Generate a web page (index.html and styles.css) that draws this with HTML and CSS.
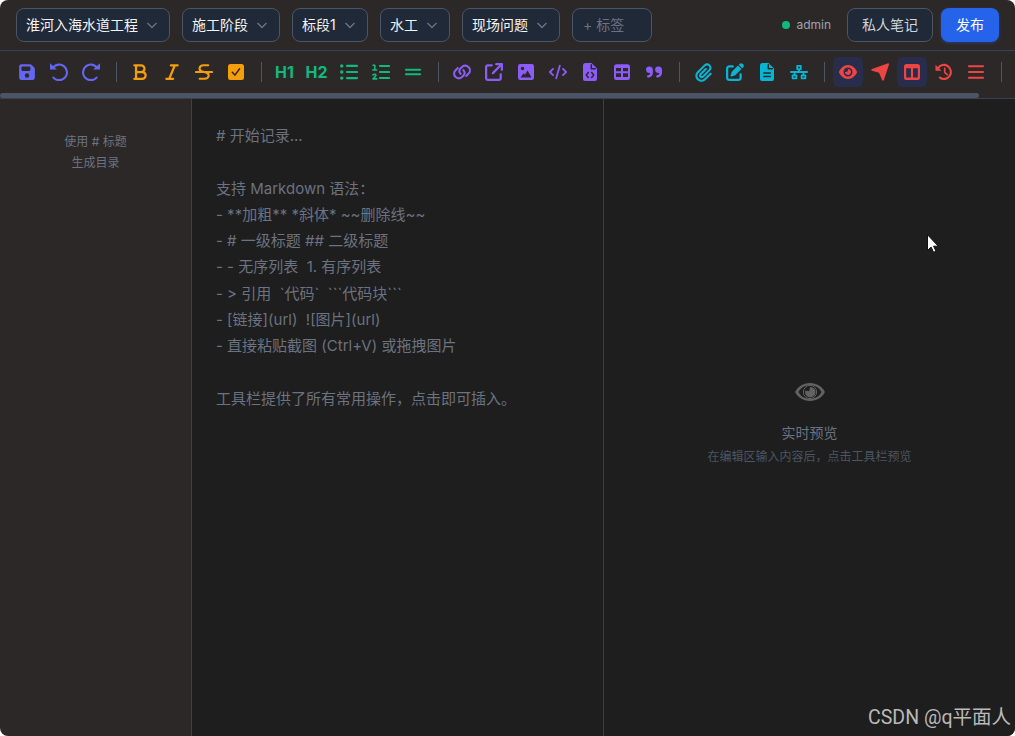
FILE: index.html
```
<!DOCTYPE html>
<html lang="zh-CN">
<head>
    <meta charset="UTF-8">
    <meta name="viewport" content="width=device-width, initial-scale=1.0">
    <title>现场笔记</title>
    <link rel="stylesheet" href="styles.css">
</head>
<body>
<div class="app">

    <header class="topbar">
        <div class="select">淮河入海水道工程<svg class="chevron" viewBox="0 0 12 12"><path d="M1.5 4l4.5 4.5L10.5 4"/></svg></div>
        <div class="select">施工阶段<svg class="chevron" viewBox="0 0 12 12"><path d="M1.5 4l4.5 4.5L10.5 4"/></svg></div>
        <div class="select select-section">标段1<svg class="chevron" viewBox="0 0 12 12"><path d="M1.5 4l4.5 4.5L10.5 4"/></svg></div>
        <div class="select">水工<svg class="chevron" viewBox="0 0 12 12"><path d="M1.5 4l4.5 4.5L10.5 4"/></svg></div>
        <div class="select">现场问题<svg class="chevron" viewBox="0 0 12 12"><path d="M1.5 4l4.5 4.5L10.5 4"/></svg></div>
        <div class="tag-input">+ 标签</div>
        <div class="user"><span class="dot"></span>admin</div>
        <button class="btn btn-private">私人笔记</button>
        <button class="btn btn-publish">发布</button>
    </header>

    <div class="toolbar">
        <div class="group indigo">
            <button class="tool"><svg viewBox="-32 0 512 512"><path d="M64 32C28.7 32 0 60.7 0 96V416c0 35.3 28.7 64 64 64H384c35.3 0 64-28.7 64-64V173.3c0-17-6.7-33.3-18.7-45.3L352 50.7C340 38.7 323.7 32 306.7 32H64zm0 96c0-17.7 14.3-32 32-32H288c17.7 0 32 14.3 32 32v64c0 17.7-14.3 32-32 32H96c-17.7 0-32-14.3-32-32V128zM224 288a64 64 0 1 1 0 128 64 64 0 1 1 0-128z"/></svg></button>
            <button class="tool"><svg viewBox="0 0 18 18"><path d="M0 .3V6.500h6.800z"/><path class="line" d="M2.800 4.900A7.800 7.800 0 1 1 3.400 14.600"/></svg></button>
            <button class="tool"><svg viewBox="0 0 18 18"><path d="M18 .3V6.500h-6.800z"/><path class="line" d="M15.200 4.900A7.800 7.800 0 1 0 14.600 14.600"/></svg></button>
        </div>
        <span class="divider"></span>
        <div class="group amber">
            <button class="tool"><svg viewBox="-64 0 512 512"><path d="M0 64C0 46.3 14.3 32 32 32H224c70.7 0 128 57.3 128 128c0 31.3-11.3 60.1-30 82.3c37.1 22.4 62 63.1 62 109.7c0 70.7-57.3 128-128 128H32c-17.7 0-32-14.3-32-32s14.3-32 32-32H48V96H32C14.3 96 0 81.7 0 64zM224 224c35.3 0 64-28.7 64-64s-28.7-64-64-64H112V224H224zM112 288V416H256c35.3 0 64-28.7 64-64s-28.7-64-64-64H112z"/></svg></button>
            <button class="tool"><svg viewBox="-64 0 512 512"><path d="M128 64c0-17.7 14.3-32 32-32H352c17.7 0 32 14.3 32 32s-14.3 32-32 32H293.3L160 416h64c17.7 0 32 14.3 32 32s-14.3 32-32 32H32c-17.7 0-32-14.3-32-32s14.3-32 32-32H90.7L224 96H160c-17.7 0-32-14.3-32-32z"/></svg></button>
            <button class="tool"><svg viewBox="0 0 18 18"><path class="line" d="M1 9h16M13.2 2.3H8.6C3.6 2.3 3.4 7.5 7.2 8.5L11 9.5c4.2 1.4 3 6.2-1.2 6.2H4.7"/></svg></button>
            <button class="tool"><svg viewBox="0 0 18 18"><rect x="1" y="1" width="16" height="16" rx="2.5"/><path class="line cut" d="M5.3 9.3l2.6 2.8 4.7-6.3"/></svg></button>
        </div>
        <span class="divider"></span>
        <div class="group green">
            <button class="tool heading">H1</button>
            <button class="tool heading">H2</button>
            <button class="tool"><svg viewBox="0 0 18 18"><path class="line" d="M7 2.9h10M7 9h10M7 15.1h10"/><circle cx="1.7" cy="2.9" r="1.7"/><circle cx="1.7" cy="9" r="1.7"/><circle cx="1.7" cy="15.1" r="1.7"/></svg></button>
            <button class="tool"><svg viewBox="0 0 18 18"><path class="line" d="M8 3h9M8 9h9M8 15h9"/><path class="line thin" d="M1 2.200h1.800v4.700M.8 7h3.800M1 11.900c1-1 3.200-.6 2.800.8-.2.9-1.800 1.900-2.800 3.200h3.800"/></svg></button>
            <button class="tool"><svg viewBox="0 0 18 18"><path class="line" d="M2 6.700h14M2 11.300h14"/></svg></button>
        </div>
        <span class="divider"></span>
        <div class="group violet">
            <button class="tool"><svg viewBox="0 0 18 18"><path class="line" d="M7.600 10.800C5.900 9 6.200 6.800 7.700 5.300l1-1a4.500 4.500 0 0 1 6.800-.2c1.900 1.900 1.900 4.700.1 6.500l-2.300 2.300M10.400 7.200c1.700 1.800 1.400 4-.1 5.500l-1 1a4.500 4.500 0 0 1-6.800.2C.6 12 .6 9.200 2.400 7.400l2.300-2.300"/></svg></button>
            <button class="tool"><svg viewBox="0 0 512 512"><path d="M320 0c-17.7 0-32 14.3-32 32s14.3 32 32 32h82.7L201.4 265.4c-12.5 12.5-12.5 32.8 0 45.3s32.8 12.5 45.3 0L448 109.3V192c0 17.7 14.3 32 32 32s32-14.3 32-32V32c0-17.7-14.3-32-32-32H320zM80 32C35.8 32 0 67.8 0 112V432c0 44.2 35.8 80 80 80H400c44.2 0 80-35.8 80-80V320c0-17.7-14.3-32-32-32s-32 14.3-32 32V432c0 8.8-7.2 16-16 16H80c-8.8 0-16-7.2-16-16V112c0-8.8 7.2-16 16-16H192c17.7 0 32-14.3 32-32s-14.3-32-32-32H80z"/></svg></button>
            <button class="tool"><svg viewBox="0 0 18 18"><path fill-rule="evenodd" d="M3.200 1h11.600A2.200 2.200 0 0 1 17 3.200v11.600a2.200 2.200 0 0 1-2.200 2.200H3.200A2.200 2.200 0 0 1 1 14.800V3.200A2.200 2.200 0 0 1 3.200 1zM5.500 3.800a1.700 1.700 0 1 0 0 3.400 1.700 1.700 0 1 0 0-3.400zM3.600 14.500h10.900L10.600 7.500 7.900 11.800 6.500 10.200z"/></svg></button>
            <button class="tool"><svg viewBox="0 0 640 512"><path d="M392.8 1.2c-17-4.9-34.7 5-39.6 22l-128 448c-4.9 17 5 34.7 22 39.6s34.7-5 39.6-22l128-448c4.9-17-5-34.7-22-39.6zm80.6 120.1c-12.5 12.5-12.5 32.8 0 45.3L562.7 256l-89.4 89.4c-12.5 12.5-12.5 32.8 0 45.3s32.8 12.5 45.3 0l112-112c12.5-12.5 12.5-32.8 0-45.3l-112-112c-12.5-12.5-32.8-12.5-45.3 0zm-306.7 0c-12.5-12.5-32.8-12.5-45.3 0l-112 112c-12.5 12.5-12.5 32.8 0 45.3l112 112c12.5 12.5 32.8 12.5 45.3 0s12.5-32.8 0-45.3L77.3 256l89.4-89.4c12.5-12.5 12.5-32.8 0-45.3z"/></svg></button>
            <button class="tool"><svg viewBox="0 0 18 18"><path d="M4.500 0H10.500L16 5.500V16a2 2 0 0 1-2 2H4a2 2 0 0 1-2-2V2.500A2.500 2.500 0 0 1 4.500 0z"/><path class="line cut" d="M10.300 1.800v4h4M7.300 9.500L5.300 12l2 2.500M10.700 9.500l2 2.500-2 2.500"/></svg></button>
            <button class="tool"><svg viewBox="0 0 18 18"><path fill-rule="evenodd" d="M3.500 1.200h11A2.500 2.500 0 0 1 17 3.700v10.800a2.500 2.500 0 0 1-2.500 2.500h-11A2.500 2.500 0 0 1 1 14.500V3.700a2.500 2.500 0 0 1 2.500-2.500zM3 5v3.200h5V5zm7 0v3.200h5V5zM3 10.300V14h5v-3.700zm7 0V14h5v-3.700z"/></svg></button>
            <button class="tool"><svg viewBox="0 0 18 18"><path d="M4.500 3.500A3.400 3.400 0 0 0 1 6.800c0 2 1.500 3.300 3.400 3.300h.8c-.1 1.400-.9 2.100-2.200 2.200-1.500.3-1.300 2.200.2 2.200 3 0 4.700-2.200 4.700-5V7c0-2-1.300-3.500-3.400-3.500zM13.600 3.500a3.400 3.400 0 0 0-3.500 3.300c0 2 1.500 3.300 3.400 3.300h.8c-.1 1.400-.9 2.100-2.200 2.200-1.500.3-1.300 2.200.2 2.200 3 0 4.700-2.200 4.700-5V7c0-2-1.300-3.500-3.400-3.500z"/></svg></button>
        </div>
        <span class="divider"></span>
        <div class="group cyan">
            <button class="tool"><svg class="clip" viewBox="-32 0 512 512"><path d="M364.2 83.8c-24.4-24.4-64-24.4-88.4 0l-184 184c-42.1 42.1-42.1 110.3 0 152.4s110.3 42.1 152.4 0l152-152c10.9-10.9 28.7-10.9 39.6 0s10.9 28.7 0 39.6l-152 152c-64 64-167.600 64-231.600 0s-64-167.600 0-231.600l184-184c46.300-46.300 121.300-46.300 167.600 0s46.300 121.300 0 167.600l-176 176c-28.600 28.600-75 28.600-103.600 0s-28.600-75 0-103.600l144-144c10.900-10.900 28.700-10.900 39.600 0s10.900 28.700 0 39.600l-144 144c-6.700 6.700-6.700 17.700 0 24.400s17.700 6.700 24.400 0l176-176c24.400-24.400 24.400-64 0-88.400z"/></svg></button>
            <button class="tool"><svg viewBox="0 0 512 512"><path d="M471.6 21.7c-21.9-21.9-57.3-21.9-79.2 0L362.3 51.7l97.9 97.9 30.1-30.1c21.9-21.9 21.9-57.3 0-79.2L471.6 21.7zm-299.2 220c-6.1 6.1-10.8 13.6-13.5 21.9l-29.6 88.8c-2.9 8.6-.6 18.1 5.8 24.6s15.9 8.7 24.6 5.8l88.8-29.6c8.2-2.7 15.7-7.4 21.9-13.5L437.7 172.3 339.7 74.3 172.4 241.7zM96 64C43 64 0 107 0 160V416c0 53 43 96 96 96H352c53 0 96-43 96-96V320c0-17.7-14.3-32-32-32s-32 14.3-32 32v96c0 17.7-14.3 32-32 32H96c-17.7 0-32-14.3-32-32V160c0-17.7 14.3-32 32-32h96c17.7 0 32-14.3 32-32s-14.3-32-32-32H96z"/></svg></button>
            <button class="tool"><svg viewBox="0 0 18 18"><path d="M4.500 0H10.500L16 5.500V16a2 2 0 0 1-2 2H4a2 2 0 0 1-2-2V2.500A2.500 2.500 0 0 1 4.500 0z"/><path class="line cut" d="M10.300 1.800v4h4M5.700 10h6.600M5.700 13.500h6.600"/></svg></button>
            <button class="tool"><svg viewBox="0 0 18 18"><path class="line net" d="M.9 9h16.200M9 6.200V9M4.600 9v3M13.400 9v3M7.200 2.900h3.600v3.200H7.200zM2.600 12.300h3.800v3H2.600zM11.600 12.300h3.800v3h-3.800z"/></svg></button>
        </div>
        <span class="divider"></span>
        <div class="group red">
            <button class="tool active"><svg viewBox="0 0 576 512"><path d="M288 32c-80.8 0-145.5 36.8-192.6 80.6C48.6 156 17.3 208 2.5 243.7c-3.3 7.9-3.3 16.7 0 24.6C17.3 304 48.6 356 95.4 399.4C142.5 443.2 207.2 480 288 480s145.5-36.8 192.6-80.6c46.8-43.5 78.1-95.4 93-131.1c3.3-7.9 3.3-16.7 0-24.6c-14.9-35.7-46.2-87.7-93-131.1C433.5 68.8 368.8 32 288 32zM144 256a144 144 0 1 1 288 0 144 144 0 1 1 -288 0zm144-64c0 35.3-28.7 64-64 64c-7.1 0-13.900-1.200-20.300-3.300c-5.500-1.800-11.900 1.600-11.700 7.400c.3 6.900 1.300 13.800 3.200 20.700c13.700 51.200 66.400 81.600 117.600 67.900s81.600-66.400 67.900-117.600c-11.100-41.500-47.800-69.400-88.600-71.100c-5.800-.2-9.200 6.100-7.400 11.700c2.100 6.400 3.300 13.200 3.300 20.300z"/></svg></button>
            <button class="tool"><svg viewBox="0 0 18 18"><path d="M16.500.4L1 6.100C0 6.500 0 7.400 1 7.700l7 2 3.100 7.300c.4.900 1.400.9 1.800-.1L17.900 1.700c.3-.9-.4-1.600-1.400-1.300z"/></svg></button>
            <button class="tool active"><svg viewBox="0 0 18 18"><path fill-rule="evenodd" d="M3.500 1h11A2.500 2.500 0 0 1 17 3.500v11a2.500 2.500 0 0 1-2.500 2.500h-11A2.500 2.500 0 0 1 1 14.500v-11A2.500 2.500 0 0 1 3.500 1zM3.200 5.200v9.300h4.700V5.200zm6.900 0v9.300h4.700V5.200z"/></svg></button>
            <button class="tool"><svg viewBox="0 0 18 18"><path d="M.5 1.700v6h6z"/><path class="line" d="M3 5.200A7 7 0 1 1 4.800 14.600"/><path class="line thin" d="M9.700 5.300v4l2.600 2.400"/></svg></button>
            <button class="tool"><svg viewBox="0 0 18 18"><path class="line" d="M2 3.200h14M2 9h14M2 14.800h14"/></svg></button>
        </div>
        <span class="divider"></span>
    </div>
    <div class="scrollbar"><div class="thumb"></div></div>

    <main class="workspace">
        <aside class="outline">使用 # 标题<br>生成目录</aside>
        <section class="editor"># 开始记录...

支持 Markdown 语法：
- **加粗** *斜体* ~~删除线~~
- # 一级标题 ## 二级标题
- - 无序列表  1. 有序列表
- &gt; 引用  `代码`  ```代码块```
- [链接](url)  ![图片](url)
- 直接粘贴截图 (Ctrl+V) 或拖拽图片

工具栏提供了所有常用操作，点击即可插入。</section>
        <section class="preview">
            <svg class="preview-eye" viewBox="0 0 30 18"><path fill-rule="evenodd" d="M15 0C8 0 3 3.500 0 9c3 5.500 8 9 15 9s12-3.500 15-9C27 3.500 22 0 15 0zM15 2.200c5.500 0 9 2.300 11.500 6.800-2.500 4.500-6 6.800-11.500 6.800S6 13.500 3.500 9C6 4.500 9.500 2.200 15 2.200z"/><circle class="iris" cx="15" cy="9" r="6.600"/><path d="M15 4l-.8 4.300-3.800-.8A5.200 5.200 0 1 0 15 4z"/></svg>
            <p class="preview-title">实时预览</p>
            <p class="preview-hint">在编辑区输入内容后，点击工具栏预览</p>
        </section>
    </main>

    <svg class="cursor" viewBox="0 0 12 19"><path d="M.5.8v15.700l3.600-3.400 2.500 5.200 2.400-1.100-2.400-5h4.700z"/></svg>
    <div class="watermark">CSDN @q平面人</div>
</div>
</body>
</html>
```
FILE: styles.css
```
* {
    box-sizing: border-box;
}

body {
    margin: 0;
    background: #fff;
    font-family: Inter, "Noto Sans CJK SC", sans-serif;
}

button {
    font-family: inherit;
    padding: 0;
    border: none;
}

.app {
    position: relative;
    display: flex;
    flex-direction: column;
    height: 736px;
    overflow: hidden;
    border-radius: 8px;
    background: #2d2828;
}

/* top bar */
.topbar {
    display: flex;
    align-items: center;
    gap: 12px;
    height: 51px;
    flex-shrink: 0;
    padding: 0 16px;
    border-bottom: 1px solid #374151;
}

.select, .tag-input {
    display: flex;
    align-items: center;
    height: 34px;
    padding-left: 10px;
    padding-bottom: 2px;
    border: 1px solid #4b5563;
    border-radius: 8px;
    background: #1f2937;
    color: #f3f4f6;
    font-size: 14px;
    white-space: nowrap;
}

.select {
    justify-content: space-between;
    padding-left: 9px;
    padding-right: 11px;
    gap: 8px;
}

.select-section {
    width: 76px;
}

.chevron {
    width: 12px;
    height: 12px;
    margin-top: 2px;
    flex-shrink: 0;
    fill: none;
    stroke: #6b7280;
    stroke-width: 1.4;
}

.tag-input {
    width: 80px;
    color: #6b7280;
}

.user {
    display: flex;
    align-items: center;
    gap: 6px;
    margin-left: auto;
    margin-right: 4px;
    padding-bottom: 1px;
    color: #9ca3af;
    font-size: 12px;
}

.dot {
    width: 8px;
    height: 8px;
    border-radius: 50%;
    background: #10b981;
}

.btn {
    height: 34px;
    padding-bottom: 2px;
    border-radius: 8px;
    font-size: 14px;
}

.btn-private {
    width: 86px;
    border: 1px solid #4b5563;
    background: #1f2937;
    color: #d1d5db;
}

.btn-publish {
    width: 58px;
    margin-left: -4px;
    background: #2563eb;
    color: #fff;
    box-shadow: 0 1px 3px rgba(37, 99, 235, 0.4);
}

/* toolbar */
.toolbar {
    display: flex;
    align-items: center;
    height: 42px;
    flex-shrink: 0;
    padding-left: 12px;
}

.group {
    display: flex;
    gap: 2px;
}

.tool {
    display: flex;
    align-items: center;
    justify-content: center;
    width: 30px;
    height: 30px;
    border-radius: 6px;
    background: none;
    color: inherit;
}

.tool svg {
    width: 18px;
    height: 18px;
    fill: currentColor;
}

.tool .clip {
    width: 19px;
    height: 19px;
}

.tool .line {
    fill: none;
    stroke: currentColor;
    stroke-width: 2.1;
    stroke-linecap: round;
    stroke-linejoin: round;
}

.tool .thin {
    stroke-width: 1.6;
}

.tool .net {
    stroke-width: 1.8;
}

.tool .cut {
    stroke: #2d2828;
    stroke-width: 1.5;
}

.heading {
    padding-right: 1px;
    font-size: 16px;
    font-weight: 700;
}

.active {
    background: #272d4b;
}

.indigo { color: #6366f1; }
.amber { color: #f59e0b; }
.green { color: #10b981; }
.violet { color: #8b5cf6; }
.cyan { color: #06b6d4; }
.red { color: #ef4444; }

.divider {
    width: 1px;
    height: 20px;
    margin: 0 8px 0 10px;
    flex-shrink: 0;
    background: #4b5563;
}

.scrollbar {
    height: 6px;
    flex-shrink: 0;
    border-bottom: 1px solid #374151;
}

.thumb {
    width: 979px;
    height: 5px;
    border-radius: 3px;
    background: #4b5563;
}

/* three panes */
.workspace {
    display: flex;
    flex: 1;
}

.outline {
    width: 192px;
    padding-top: 32px;
    border-right: 1px solid #374151;
    color: #6b7280;
    font-size: 12px;
    line-height: 21px;
    text-align: center;
}

.editor {
    width: 412px;
    padding: 24px;
    border-right: 1px solid #3a3f47;
    background: #1e1e1e;
    color: #6b7280;
    font-size: 15px;
    line-height: 26.25px;
    white-space: pre-wrap;
}

.preview {
    display: flex;
    flex: 1;
    flex-direction: column;
    align-items: center;
    padding-top: 284px;
    background: #1e1e1e;
}

.preview-eye {
    width: 30px;
    height: 18px;
    fill: #626262;
}

.iris {
    fill: none;
    stroke: #626262;
    stroke-width: 1;
}

.preview p {
    margin: 0;
}

.preview .preview-title {
    margin-top: 21px;
    color: #6b7280;
    font-size: 14px;
    line-height: 22px;
}

.preview .preview-hint {
    margin-top: 4px;
    color: #4b5563;
    font-size: 12px;
    line-height: 18px;
}

.cursor {
    position: absolute;
    left: 927px;
    top: 234px;
    width: 12px;
    height: 19px;
    fill: #fff;
    stroke: #111;
    stroke-width: 1;
}

.watermark {
    position: absolute;
    right: 4px;
    bottom: 4px;
    color: #b9b9b9;
    font-family: Roboto, "Noto Sans CJK SC", sans-serif;
    font-size: 19.5px;
    line-height: 28px;
}
```
